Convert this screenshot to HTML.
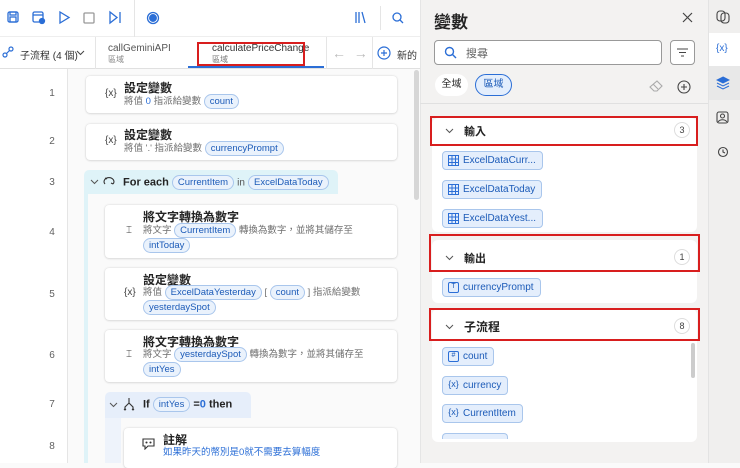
<!DOCTYPE html>
<html><head><meta charset="utf-8"><style>
*{box-sizing:border-box;margin:0;padding:0}
body{width:740px;height:463px;overflow:hidden;background:#fafafa;font-family:"Liberation Sans","Noto Sans CJK TC",sans-serif;position:relative;color:#242424}
.a{position:absolute}
.pill{display:inline-block;border:1px solid #a9c6ec;background:#eaf2fc;color:#1c5bb8;border-radius:9px;padding:0 5px;font-size:9.5px;line-height:13px;vertical-align:middle}
.card{position:absolute;background:#fff;border-radius:4px;box-shadow:0 0 2px rgba(0,0,0,.15),0 1px 2px rgba(0,0,0,.08)}
.t{position:absolute;font-size:12px;font-weight:bold;color:#242424}
.s{position:absolute;font-size:9.5px;color:#707070;white-space:nowrap;line-height:15px}
.num{position:absolute;width:20px;text-align:center;font-size:10px;color:#616161;left:42px}
.ic{position:absolute;font-size:10px;color:#424242}
.vp{position:absolute;left:442px;height:19px;border:1px solid #a9c6ec;background:#e4eefc;border-radius:4px;font-size:10px;color:#1c5bb8;line-height:17px;padding:0 6px 0 20px}
.vp i{position:absolute;left:5px;top:3px;width:11px;height:11px;border:1.3px solid #2b6ed6;border-radius:2px;font-style:normal;font-size:7px;line-height:8px;text-align:center}
.vp svg{position:absolute;left:5px;top:3px}
.sec{position:absolute;left:432px;width:265px;background:#fff;border-radius:6px}
.red{position:absolute;border:2.5px solid #d81e1e}
.badge{position:absolute;width:16px;height:16px;border-radius:50%;border:1px solid #ddd;font-size:9px;text-align:center;line-height:14px;color:#424242}
</style></head><body>
<div class="a" style="left:0;top:0;width:420px;height:37px;background:#fff;border-bottom:1px solid #eee"></div>
<div class="a" style="left:134px;top:0;width:1px;height:37px;background:#e5e5e5"></div>
<svg class="a" style="left:0;top:0" width="420" height="37" fill="none" stroke="#2b6ed6" stroke-width="1.3">
<rect x="8" y="12" width="10" height="10" rx="1.5"/><rect x="10" y="12" width="6" height="3"/><rect x="10" y="17" width="6" height="5"/>
<rect x="33" y="12" width="10" height="10" rx="1.5"/><line x1="33" y1="15" x2="43" y2="15"/><circle cx="42" cy="21" r="2.5" fill="#2b6ed6"/>
<path d="M60 12 L69 17.5 L60 23 Z"/>
<rect x="84" y="13" width="10" height="10" rx="1" stroke="#999"/>
<path d="M110 12 L117 17.5 L110 23 Z"/><line x1="120" y1="12" x2="120" y2="23"/>
<circle cx="153" cy="18" r="5.5"/><circle cx="153" cy="18" r="3.3" fill="#2b6ed6"/>
<path d="M356 12v11M359 12v11M362 12l3 11"/>
<circle cx="397" cy="17" r="4"/><line x1="400" y1="20" x2="403" y2="23"/>
</svg>
<div class="a" style="left:380px;top:6px;width:1px;height:24px;background:#e5e5e5"></div>
<div class="a" style="left:0;top:37px;width:420px;height:32px;background:#fff;border-bottom:1px solid #e0e0e0"></div>
<svg class="a" style="left:2px;top:46px" width="12" height="12" fill="none" stroke="#2b6ed6" stroke-width="1.2"><circle cx="3" cy="9" r="2"/><circle cx="9" cy="3" r="2"/><line x1="4.5" y1="7.5" x2="7.5" y2="4.5"/></svg>
<div class="a" style="left:20px;top:47px;font-size:10px;color:#333;white-space:nowrap">子流程 (4 個)</div>
<svg class="a" style="left:76px;top:50px" width="9" height="6" fill="none" stroke="#444" stroke-width="1"><path d="M1 1l3.5 3.5L8 1"/></svg>
<div class="a" style="left:95px;top:37px;width:1px;height:32px;background:#e5e5e5"></div>
<div class="a" style="left:108px;top:43px;font-size:10px;color:#555;line-height:11px">callGeminiAPI<br><span style="font-size:8px;color:#888">區域</span></div>
<div class="a" style="left:188px;top:66px;width:136px;height:2px;background:#2b6ed6"></div>
<div class="a" style="left:212px;top:43px;font-size:10px;color:#333;line-height:11px">calculatePriceChange<br><span style="font-size:8px;color:#777">區域</span></div>
<div class="red" style="left:197px;top:42px;width:108px;height:24px"></div>
<div class="a" style="left:326px;top:37px;width:1px;height:32px;background:#e5e5e5"></div>
<div class="a" style="left:332px;top:45px;font-size:14px;color:#bbb">←&nbsp; →</div>
<div class="a" style="left:372px;top:37px;width:1px;height:32px;background:#e5e5e5"></div>
<svg class="a" style="left:377px;top:46px" width="14" height="14" fill="none" stroke="#2b6ed6" stroke-width="1.2"><circle cx="7" cy="7" r="6"/><path d="M7 4v6M4 7h6"/></svg>
<div class="a" style="left:397px;top:47px;font-size:10px;color:#333">新的</div>
<div class="a" style="left:0;top:69px;width:68px;height:394px;background:#fff;border-right:1px solid #e5e5e5"></div>
<div class="a" style="left:68px;top:69px;width:346px;height:394px;background:#fafafa"></div>
<div class="a" style="left:414px;top:70px;width:5px;height:130px;background:#d6d6d6;border-radius:3px"></div>
<div class="num" style="top:88px">1</div><div class="num" style="top:136px">2</div><div class="num" style="top:177px">3</div><div class="num" style="top:227px">4</div><div class="num" style="top:289px">5</div><div class="num" style="top:350px">6</div><div class="num" style="top:399px">7</div><div class="num" style="top:441px">8</div>

<div class="card" style="left:86px;top:76px;width:311px;height:37px"></div>
<div class="ic" style="left:105px;top:88px">{x}</div>
<div class="t" style="left:124px;top:79px">設定變數</div>
<div class="s" style="left:124px;top:94px">將值 <span style="color:#2b6ed6">0</span> 指派給變數 <span class="pill">count</span></div>
<div class="card" style="left:86px;top:124px;width:311px;height:36px"></div>
<div class="ic" style="left:105px;top:135px">{x}</div>
<div class="t" style="left:124px;top:126px">設定變數</div>
<div class="s" style="left:124px;top:141px">將值 '.' 指派給變數 <span class="pill">currencyPrompt</span></div>

<div class="a" style="left:84px;top:170px;width:254px;height:24px;background:#dff3f8;border-radius:5px 5px 0 0"></div>
<div class="a" style="left:84px;top:194px;width:4px;height:269px;background:#dff3f8"></div>
<svg class="a" style="left:90px;top:179px" width="9" height="6" fill="none" stroke="#555" stroke-width="1"><path d="M1 1l3.5 3.5L8 1"/></svg>
<svg class="a" style="left:102px;top:175px" width="14" height="12" fill="none" stroke="#333" stroke-width="1.1"><path d="M3 9A5 4 0 1 1 11 9M11 9l-2-1M3 3l2 1"/></svg>
<div class="a" style="left:123px;top:175px;font-size:11px;font-weight:bold">For each <span class="pill" style="font-weight:normal">CurrentItem</span> <span style="font-weight:normal;font-size:10px;color:#555">in</span> <span class="pill" style="font-weight:normal">ExcelDataToday</span></div>

<div class="card" style="left:105px;top:205px;width:292px;height:53px"></div>
<div class="ic" style="left:126px;top:225px">⌶</div>
<div class="t" style="left:143px;top:208px">將文字轉換為數字</div>
<div class="s" style="left:143px;top:223px">將文字 <span class="pill">CurrentItem</span> 轉換為數字，並將其儲存至</div>
<div class="s" style="left:143px;top:238px"><span class="pill">intToday</span></div>

<div class="card" style="left:105px;top:268px;width:292px;height:52px"></div>
<div class="ic" style="left:124px;top:287px">{x}</div>
<div class="t" style="left:143px;top:271px">設定變數</div>
<div class="s" style="left:143px;top:285px">將值 <span class="pill">ExcelDataYesterday</span> [ <span class="pill">count</span> ] 指派給變數</div>
<div class="s" style="left:143px;top:300px"><span class="pill">yesterdaySpot</span></div>

<div class="card" style="left:105px;top:330px;width:292px;height:52px"></div>
<div class="ic" style="left:126px;top:349px">⌶</div>
<div class="t" style="left:143px;top:333px">將文字轉換為數字</div>
<div class="s" style="left:143px;top:347px">將文字 <span class="pill">yesterdaySpot</span> 轉換為數字，並將其儲存至</div>
<div class="s" style="left:143px;top:362px"><span class="pill">intYes</span></div>

<div class="a" style="left:105px;top:392px;width:146px;height:26px;background:#e6eefa;border-radius:5px 5px 0 0"></div>
<div class="a" style="left:105px;top:418px;width:16px;height:45px;background:#eef3fb"></div>
<svg class="a" style="left:109px;top:402px" width="9" height="6" fill="none" stroke="#555" stroke-width="1"><path d="M1 1l3.5 3.5L8 1"/></svg>
<svg class="a" style="left:123px;top:397px" width="12" height="14" fill="none" stroke="#333" stroke-width="1.1"><path d="M6 1v5M6 6L2 10v3M6 6l4 4v3M1 12l1 1 1-1M9 12l1 1 1-1"/></svg>
<div class="a" style="left:143px;top:397px;font-size:11px;font-weight:bold">If <span class="pill" style="font-weight:normal">intYes</span> =<span style="color:#2b6ed6">0</span> then</div>
<div class="card" style="left:124px;top:428px;width:273px;height:40px"></div>
<svg class="a" style="left:142px;top:438px" width="13" height="12" fill="none" stroke="#333" stroke-width="1.1"><path d="M1 1h11v7H6l-3 3V8H1z"/><circle cx="4.5" cy="4.5" r=".5" fill="#333"/><circle cx="8.5" cy="4.5" r=".5" fill="#333"/></svg>
<div class="t" style="left:163px;top:431px">註解</div>
<div class="s" style="left:163px;top:445px;color:#2b6ed6">如果昨天的幣別是0就不需要去算幅度</div>

<div class="a" style="left:420px;top:0;width:288px;height:463px;background:#f3f2f1;border-left:1px solid #e5e5e5"></div>
<div class="a" style="left:434px;top:8px;font-size:17px;font-weight:bold">變數</div>
<svg class="a" style="left:682px;top:12px" width="11" height="11" stroke="#444" stroke-width="1.2"><path d="M1 1l9 9M10 1l-9 9"/></svg>
<div class="a" style="left:434px;top:40px;width:228px;height:25px;background:#fff;border:1px solid #999;border-radius:4px"></div>
<svg class="a" style="left:444px;top:46px" width="13" height="13" fill="none" stroke="#2b6ed6" stroke-width="1.4"><circle cx="5.5" cy="5.5" r="4"/><line x1="8.5" y1="8.5" x2="12" y2="12"/></svg>
<div class="a" style="left:466px;top:45px;font-size:11px;color:#666">搜尋</div>
<div class="a" style="left:670px;top:40px;width:25px;height:25px;background:#fff;border:1px solid #999;border-radius:4px"></div>
<svg class="a" style="left:676px;top:47px" width="13" height="11" stroke="#444" stroke-width="1.1"><path d="M1 2h11M3 5.5h7M5 9h3"/></svg>
<div class="a" style="left:435px;top:74px;width:33px;height:22px;background:#fff;border-radius:11px;font-size:10px;text-align:center;line-height:22px">全域</div>
<div class="a" style="left:475px;top:74px;width:37px;height:22px;background:#e4eefc;border:1.3px solid #2b6ed6;border-radius:11px;font-size:10px;text-align:center;line-height:19px;color:#1c5bb8">區域</div>
<svg class="a" style="left:649px;top:80px" width="14" height="12" fill="none" stroke="#aaa" stroke-width="1.1"><path d="M8 1l5 5-5 5H5L1 7z M4 4l5 5"/></svg>
<svg class="a" style="left:677px;top:80px" width="14" height="14" fill="none" stroke="#444" stroke-width="1.1"><circle cx="7" cy="7" r="6"/><path d="M7 4v6M4 7h6"/></svg>
<div class="a" style="left:420px;top:103px;width:288px;height:1px;background:#e0e0e0"></div>

<div class="sec" style="top:118px;height:114px"></div>
<svg class="a" style="left:445px;top:128px" width="9" height="6" fill="none" stroke="#555" stroke-width="1"><path d="M1 1l3.5 3.5L8 1"/></svg>
<div class="a" style="left:464px;top:123px;font-size:11px;font-weight:bold">輸入</div>
<div class="badge" style="left:674px;top:122px">3</div>
<div class="red" style="left:430px;top:116px;width:268px;height:30px"></div>
<div class="vp" style="top:151px">ExcelDataCurr...<svg width="11" height="11" fill="none" stroke="#2b6ed6" stroke-width="1"><rect x=".5" y=".5" width="10" height="10"/><path d="M.5 4h10M.5 7.5h10M4 .5v10M7.5 .5v10"/></svg></div>
<div class="vp" style="top:180px">ExcelDataToday<svg width="11" height="11" fill="none" stroke="#2b6ed6" stroke-width="1"><rect x=".5" y=".5" width="10" height="10"/><path d="M.5 4h10M.5 7.5h10M4 .5v10M7.5 .5v10"/></svg></div>
<div class="vp" style="top:209px">ExcelDataYest...<svg width="11" height="11" fill="none" stroke="#2b6ed6" stroke-width="1"><rect x=".5" y=".5" width="10" height="10"/><path d="M.5 4h10M.5 7.5h10M4 .5v10M7.5 .5v10"/></svg></div>

<div class="sec" style="top:240px;height:63px"></div>
<svg class="a" style="left:445px;top:255px" width="9" height="6" fill="none" stroke="#555" stroke-width="1"><path d="M1 1l3.5 3.5L8 1"/></svg>
<div class="a" style="left:464px;top:250px;font-size:11px;font-weight:bold">輸出</div>
<div class="badge" style="left:674px;top:249px">1</div>
<div class="red" style="left:429px;top:234px;width:271px;height:38px"></div>
<div class="vp" style="top:278px">currencyPrompt<i>T</i></div>

<div class="sec" style="top:309px;height:133px"></div>
<svg class="a" style="left:445px;top:324px" width="9" height="6" fill="none" stroke="#555" stroke-width="1"><path d="M1 1l3.5 3.5L8 1"/></svg>
<div class="a" style="left:464px;top:318px;font-size:12px;font-weight:bold">子流程</div>
<div class="badge" style="left:674px;top:318px">8</div>
<div class="red" style="left:429px;top:308px;width:271px;height:33px"></div>
<div class="vp" style="top:347px">count<i>#</i></div>
<div class="vp" style="top:376px">currency<i style="border:none;font-size:9px">{x}</i></div>
<div class="vp" style="top:404px">CurrentItem<i style="border:none;font-size:9px">{x}</i></div>
<div class="vp" style="top:433px;height:6px;width:66px;border-bottom:none;border-radius:4px 4px 0 0"></div>
<div class="a" style="left:691px;top:343px;width:4px;height:35px;background:#ccc;border-radius:2px"></div>

<div class="a" style="left:708px;top:0;width:32px;height:463px;background:#f0efee;border-left:1px solid #e3e3e3"></div>
<div class="a" style="left:709px;top:33px;width:31px;height:33px;background:#fff"></div>
<div class="a" style="left:709px;top:66px;width:31px;height:34px;background:#e8e8e8"></div>
<svg class="a" style="left:716px;top:10px" width="14" height="14" fill="none" stroke="#444" stroke-width="1.1"><rect x="1" y="1" width="8" height="10" rx="3"/><rect x="5" y="3" width="8" height="10" rx="3"/></svg>
<div class="a" style="left:716px;top:43px;font-size:10px;color:#2b6ed6">{x}</div>
<svg class="a" style="left:716px;top:76px" width="14" height="14" fill="#2b6ed6" stroke="#2b6ed6" stroke-width="1"><path d="M7 1l6 3-6 3-6-3z"/><path d="M1 7l6 3 6-3M1 10l6 3 6-3" fill="none"/></svg>
<svg class="a" style="left:716px;top:111px" width="13" height="13" fill="none" stroke="#444" stroke-width="1.1"><rect x="1" y="1" width="11" height="11" rx="2"/><circle cx="6.5" cy="5" r="2"/><path d="M2 11c2-3 7-3 9 0"/></svg>
<svg class="a" style="left:717px;top:146px" width="12" height="12" fill="none" stroke="#444" stroke-width="1.1"><circle cx="6" cy="6" r="4.5"/><path d="M6 3.5v2.5l2 1"/></svg>
</body></html>
